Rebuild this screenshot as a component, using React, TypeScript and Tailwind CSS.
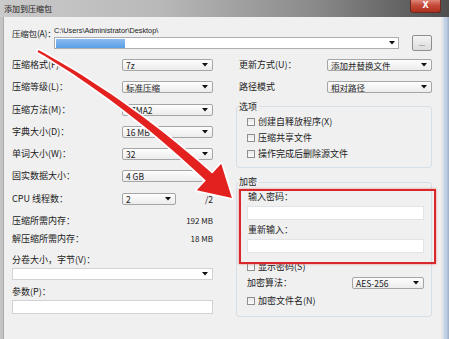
import React from "react";

const P0 = [38, 51];
const P1 = [125, 100];
const P2 = [209, 177];

function buildArrow(): string {
  const N = 24;
  const left: number[][] = [];
  const right: number[][] = [];
  for (let i = 0; i <= N; i++) {
    const t = i / N;
    const x = (1 - t) * (1 - t) * P0[0] + 2 * (1 - t) * t * P1[0] + t * t * P2[0];
    const y = (1 - t) * (1 - t) * P0[1] + 2 * (1 - t) * t * P1[1] + t * t * P2[1];
    let dx = 2 * (1 - t) * (P1[0] - P0[0]) + 2 * t * (P2[0] - P1[0]);
    let dy = 2 * (1 - t) * (P1[1] - P0[1]) + 2 * t * (P2[1] - P1[1]);
    const l = Math.hypot(dx, dy);
    dx /= l;
    dy /= l;
    const w = 1.0 + t * 3.8;
    left.push([x - dy * w, y + dx * w]);
    right.push([x + dy * w, y - dx * w]);
  }
  let dx = P2[0] - P1[0];
  let dy = P2[1] - P1[1];
  const l = Math.hypot(dx, dy);
  dx /= l;
  dy /= l;
  const tip = [P2[0] + dx * 31, P2[1] + dy * 31];
  const hw = 18;
  const c1 = [P2[0] - dy * hw, P2[1] + dx * hw];
  const c2 = [P2[0] + dy * hw, P2[1] - dx * hw];
  const pts = [...left, c1, tip, c2, ...right.reverse()];
  return "M" + pts.map((p) => `${p[0].toFixed(1)} ${p[1].toFixed(1)}`).join(" L") + " Z";
}

const arrowPath = buildArrow();

function Tri() {
  return (
    <svg width="6" height="4" viewBox="0 0 6 4" className="shrink-0">
      <polygon points="0,0 6,0 3,3.5" fill="#111" />
    </svg>
  );
}

function Select({ value, w }: { value: string; w: string }) {
  return (
    <div
      className={`h-[12px] ${w} shrink-0 border border-[#a5a5a5] rounded-[2px] bg-[linear-gradient(#fdfdfd,#ececec)] flex items-center justify-between pl-[3px] pr-[4px] text-[8.5px] leading-[10px] whitespace-nowrap`}
    >
      <span>{value}</span>
      <Tri />
    </div>
  );
}

function Check({ label }: { label: string }) {
  return (
    <div className="flex items-center h-[16px] text-[9px] leading-[10px] whitespace-nowrap">
      <span className="w-[8px] h-[8px] border border-[#8f8f8f] bg-[linear-gradient(#e9e9e9,#fbfbfb)] mr-[3px] shrink-0" />
      <span>{label}</span>
    </div>
  );
}

function Row({ label, children }: { label: string; children?: React.ReactNode }) {
  return (
    <div className="h-[22.3px] flex items-center">
      <span className="w-[110px] shrink-0 text-[9px] leading-[10px] whitespace-nowrap">{label}</span>
      {children}
    </div>
  );
}

export default function App() {
  return (
    <div className="w-[449px] h-[339px] relative overflow-hidden bg-[#f0f0f0] text-[#222] font-['Noto_Sans_CJK_SC',sans-serif]">
      {/* Title bar */}
      <div className="h-[17px] flex bg-[linear-gradient(to_right,#cacaca_0%,#b9b9b9_35%,#8a8a8a_70%,#4e4e4e_100%)]">
        <span className="pl-[4px] text-[8px] leading-[17px] text-[#1a1a1a] whitespace-nowrap">添加到压缩包</span>
        <div className="ml-auto mr-[8px] w-[31px] h-[13px] rounded-b-[3px] border border-t-0 border-[#6b2a22] bg-[linear-gradient(#e0867a,#c44a37_45%,#b0301f)] flex items-center justify-center text-white text-[8px] font-bold leading-none font-['DejaVu_Sans',sans-serif]">
          X
        </div>
      </div>

      <div className="flex h-[322px]">
        <div className="w-[4px] bg-[#c4c4c4] border-r border-[#a9a9a9]" />
        <div className="w-[437px] pl-[8px] pr-[9px] pt-[9px]">
          {/* Row 1 */}
          <div className="flex h-[25px]">
            <span className="w-[42px] shrink-0 mt-[2px] text-[8.5px] leading-[10px] whitespace-nowrap tracking-[-0.2px]">压缩包(A)：</span>
            <div className="w-[345px] flex flex-col">
              <span className="h-[10px] leading-[10px] text-[7.3px] font-['Liberation_Sans',sans-serif] whitespace-nowrap">
                C:\Users\Administrator\Desktop\
              </span>
              <div className="mt-[1px] h-[12px] bg-white border border-[#abadb3] flex items-center pl-[1px] pr-[3px]">
                <div className="w-[69px] h-[9px] bg-[linear-gradient(#8cbcf0,#5b9fe6)]" />
                <div className="ml-auto">
                  <Tri />
                </div>
              </div>
            </div>
            <div className="ml-[13px] mt-[9px] w-[20px] h-[16px] border border-[#8e8f8f] rounded-[2px] bg-[linear-gradient(#f4f4f4,#dcdcdc)] flex items-center justify-center text-[7px] leading-none text-[#555]">
              ...
            </div>
          </div>

          {/* Columns */}
          <div className="flex mt-[2.85px]">
            {/* Left column */}
            <div className="w-[201px] flex flex-col">
              <Row label="压缩格式(F):">
                <Select value="7z" w="w-[91px]" />
              </Row>
              <Row label="压缩等级(L)：">
                <Select value="标准压缩" w="w-[91px]" />
              </Row>
              <Row label="压缩方法(M)：">
                <Select value="LZMA2" w="w-[91px]" />
              </Row>
              <Row label="字典大小(D)：">
                <Select value="16 MB" w="w-[91px]" />
              </Row>
              <Row label="单词大小(W)：">
                <Select value="32" w="w-[91px]" />
              </Row>
              <Row label="固实数据大小：">
                <Select value="4 GB" w="w-[91px]" />
              </Row>
              <Row label="CPU 线程数：">
                <Select value="2" w="w-[54px]" />
                <span className="ml-auto text-[8.5px] leading-[10px]">/2</span>
              </Row>
              <Row label="压缩所需内存：">
                <span className="ml-auto text-[8px] leading-[10px] whitespace-nowrap">192 MB</span>
              </Row>
              <div className="h-[13.5px] flex items-center">
                <span className="text-[9px] leading-[10px] whitespace-nowrap">解压缩所需内存：</span>
                <span className="ml-auto text-[8px] leading-[10px] whitespace-nowrap">18 MB</span>
              </div>
              <span className="mt-[9.25px] h-[10px] text-[9px] leading-[10px] whitespace-nowrap">分卷大小，字节(V)：</span>
              <div className="mt-[3px] h-[12px] bg-white border border-[#d0d2d6] flex items-center justify-end pr-[4px]">
                <Tri />
              </div>
              <span className="mt-[6.7px] h-[10px] text-[9px] leading-[10px] whitespace-nowrap">参数(P)：</span>
              <div className="mt-[3.3px] h-[14px] bg-white border border-[#d0d2d6]" />
            </div>

            {/* Right column */}
            <div className="w-[196px] ml-[23px] flex flex-col">
              <div className="h-[22.3px] flex items-center">
                <span className="w-[91px] pl-[3px] shrink-0 text-[9px] leading-[10px] whitespace-nowrap">更新方式(U)：</span>
                <Select value="添加并替换文件" w="w-[105px]" />
              </div>
              <div className="h-[22.3px] flex items-center">
                <span className="w-[91px] pl-[3px] shrink-0 text-[9px] leading-[10px] whitespace-nowrap">路径模式</span>
                <Select value="相对路径" w="w-[105px]" />
              </div>

              <fieldset className="mt-[3.25px] border border-[#d5dfe5] rounded-[3px]">
                <legend className="ml-[2px] pr-[2px] text-[9px] leading-[10px]">选项</legend>
                <div className="pl-[10px] pt-[2.8px] pb-[5px]">
                  <Check label="创建自释放程序(X)" />
                  <Check label="压缩共享文件" />
                  <Check label="操作完成后删除源文件" />
                </div>
              </fieldset>

              <fieldset className="mt-[9px] border border-[#d5dfe5] rounded-[3px]">
                <legend className="ml-[2px] pr-[2px] text-[9px] leading-[10px]">加密</legend>
                <div className="pl-[10px] pr-[7px] pt-[5px] pb-[7px] flex flex-col">
                  <span className="h-[10px] text-[9px] leading-[10px] pl-[1px] whitespace-nowrap">输入密码：</span>
                  <div className="mt-[4px] h-[14px] bg-white border border-[#e2e3e6]" />
                  <span className="mt-[5px] h-[10px] text-[9px] leading-[10px] pl-[1px] whitespace-nowrap">重新输入：</span>
                  <div className="mt-[4px] h-[14px] bg-white border border-[#e2e3e6]" />
                  <div className="mt-[6px]">
                    <Check label="显示密码(S)" />
                  </div>
                  <div className="h-[16px] flex items-center">
                    <span className="text-[9px] leading-[10px] whitespace-nowrap">加密算法：</span>
                    <div className="ml-auto">
                      <Select value="AES-256" w="w-[72px]" />
                    </div>
                  </div>
                  <div className="mt-[2px]">
                    <Check label="加密文件名(N)" />
                  </div>
                </div>
              </fieldset>
            </div>
          </div>
        </div>
        <div className="w-[8px] bg-[linear-gradient(to_right,#e6e6e6_0%,#e6e6e6_20%,#c6d6ec_40%,#bccde2_70%,#9eafc4_100%)]" />
      </div>

      {/* Red highlight rectangle */}
      <div className="absolute left-[239px] top-[189px] w-[197px] h-[75px] border-2 border-[#d8282b] shadow-[0_0_2px_rgba(216,40,43,0.6)] pointer-events-none" />

      {/* Arrow */}
      <svg className="absolute left-0 top-0 pointer-events-none" width="449" height="339" viewBox="0 0 449 339">
        <path d={arrowPath} fill="#e3221f" stroke="#ffffff" strokeWidth="3.5" strokeLinejoin="round" paintOrder="stroke" />
      </svg>
    </div>
  );
}
